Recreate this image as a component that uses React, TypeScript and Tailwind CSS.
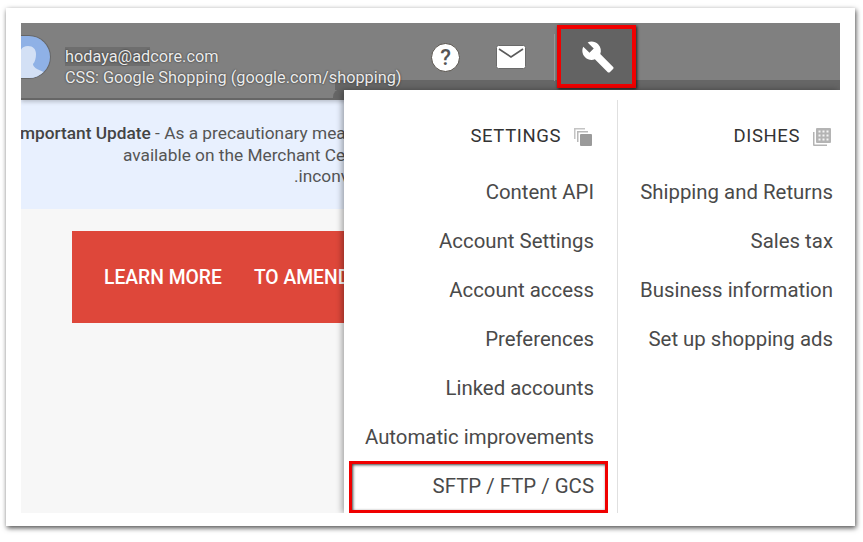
import React from 'react';
import { MdBuild } from 'react-icons/md';

const settingsItems = [
  'Content API',
  'Account Settings',
  'Account access',
  'Preferences',
  'Linked accounts',
  'Automatic improvements',
];

const dishesItems = ['Shipping and Returns', 'Sales tax', 'Business information', 'Set up shopping ads'];

const MenuRow = ({ label }: { label: string }) => (
  <div className="h-[49px] flex items-center justify-end text-[20.400px] text-[#4a4a4a] whitespace-nowrap">{label}</div>
);

const StackIcon = () => (
  <svg width="20" height="20" viewBox="0 0 20 20" className="ml-[12px] mr-[1px]">
    <path d="M1 1h11v1.500H2.500V12H1z" fill="#c4c4c4" />
    <path d="M4 4h11v1.500H5.500V15H4z" fill="#b8b8b8" />
    <rect x="7" y="7" width="12" height="12" rx="1" fill="#9a9a9a" />
  </svg>
);

const GridIcon = () => (
  <svg width="20" height="20" viewBox="0 0 20 20" className="ml-[12px] mr-[1px]">
    <path d="M1 5h1.500v12.500H15V19H2a1 1 0 0 1-1-1z" fill="#b4b4b4" />
    <rect x="4" y="1" width="15" height="15" rx="1" fill="#b4b4b4" />
    <path d="M6.500 3.500h2v2h-2zM10.500 3.500h2v2h-2zM14.500 3.500h2v2h-2zM6.500 7.500h2v2h-2zM10.500 7.500h2v2h-2zM14.500 7.500h2v2h-2zM6.500 11.500h2v2h-2zM10.500 11.500h2v2h-2zM14.500 11.500h2v2h-2z" fill="#f4f4f4" />
  </svg>
);

const MenuHeading = ({ children }: { children: React.ReactNode }) => (
  <div className="h-[68px] pt-[5px] flex items-center justify-end text-[18.500px] text-[#333333] tracking-[0.600px]">
    {children}
  </div>
);

export default function App() {
  return (
    <div className="w-[863px] h-[542px] bg-white pt-[8px] pl-[6px] font-['Roboto',sans-serif] overflow-hidden">
      <div className="w-[849px] h-[518px] bg-white pt-[15px] pl-[15px] shadow-[1px_2px_5px_rgba(0,0,0,0.7)]">
        <div className="relative w-[819px] h-[490px] overflow-hidden bg-[#f7f7f7]">
          {/* barra superior */}
          <div className="relative h-[77px] bg-[#808080] border-b-2 border-[#666666] flex shadow-[0_2px_4px_rgba(0,0,0,0.2)]">
            <div className="w-[30px] h-[44px] mt-[12px] bg-[#8fb1e6] rounded-r-[22px] overflow-hidden shrink-0 border-r border-y border-[#666666]">
              <svg width="30" height="44" viewBox="0 0 30 44">
                <path d="M0 44V36c0-1 0-3 0-5-1-1-1-3-1-5L-1 18c0-5 3-8 8-8s8 3 8 8c0 4-1 8-3 10 0 3 3 5 13 9l-3 7z" fill="#d3e0f5" />
              </svg>
            </div>
            <div className="relative z-10 ml-[14px] pt-[23px] text-[16.300px] leading-[21px] text-[#ececec] whitespace-nowrap [text-shadow:0_0_2px_#222]">
              <div>
                <span className="bg-[#6e6e6e]">hodaya@ad</span>core.com
              </div>
              <div>CSS: Google Shopping (google.com/shopping)</div>
            </div>
          </div>

          {/* banner */}
          <div className="h-[109px] bg-[#e8f0fe] pt-[23px] text-[17.300px] leading-[21.500px] text-[#555555] whitespace-nowrap">
            <div className="-ml-[6px]">
              <span className="font-medium text-[#444444]">Important Update</span> - As a precautionary measure
            </div>
            <div className="ml-[102px]">available on the Merchant Center</div>
            <div className="ml-[273px]">.inconvenience</div>
          </div>

          {/* botao vermelho */}
          <div className="ml-[51px] mt-[22px] h-[92px] w-[400px] bg-[#de473a] flex items-center pl-[32px] pt-[2px] gap-[32px] text-[19.300px] font-medium text-white whitespace-nowrap">
            <span>LEARN MORE</span>
            <span>TO AMEND</span>
          </div>

          {/* faixa escura por cima da barra */}
          <div className="absolute left-[314px] right-0 top-[57px] h-[10px] bg-[#666666]" />
          <div className="absolute left-[312px] top-[66px] w-[12px] h-[11px] bg-[#666666] rounded-tl-[8px]" />
          <div className="absolute left-[533px] top-[11px] w-px h-[47px] bg-[#999999]" />

          {/* icones da barra */}
          <div className="absolute left-[410px] top-[20px] w-[29px] h-[29px] rounded-full bg-white border border-[#55504a] flex items-center justify-center text-[22px] font-medium leading-none text-[#555555]">
            ?
          </div>
          <svg width="30" height="24" viewBox="0 0 30 24" className="absolute left-[475px] top-[22px]">
            <rect x="0.500" y="0.500" width="29" height="23" rx="2" fill="white" stroke="#6a6a6a" />
            <path d="M3 4l12 8 12-8" fill="none" stroke="#5a5a5a" strokeWidth="1.600" />
          </svg>

          {/* botao ativo com destaque */}
          <div className="absolute left-[536px] top-[2px] w-[79px] h-[63px] pl-[3px] bg-[#636363] border-[4px] border-[#f00000] shadow-[1px_1px_3px_rgba(0,0,0,0.8)] flex items-center justify-center">
            <MdBuild size={34} color="white" />
          </div>

          {/* menu */}
          <div className="absolute left-[323px] top-[67px] right-0 bottom-0 bg-white flex shadow-[-2px_0_6px_rgba(0,0,0,0.35)]">
            <div className="w-[274px] pr-[23px] pl-[21px] mt-[10px] border-r border-[#e0e0e0]">
              <MenuHeading>
                SETTINGS
                <StackIcon />
              </MenuHeading>
              {settingsItems.map((item) => (
                <MenuRow key={item} label={item} />
              ))}
              <div className="h-[52px] -mt-[1px] -ml-[16px] -mr-[14px] pr-[11px] pb-[2px] flex items-center justify-end text-[20.400px] text-[#4a4a4a] border-[3px] border-[#f00000] shadow-[inset_1px_1px_3px_rgba(0,0,0,0.75)]">
                SFTP / FTP / GCS
              </div>
            </div>
            <div className="flex-1 pr-[7px] mt-[10px]">
              <MenuHeading>
                DISHES
                <GridIcon />
              </MenuHeading>
              {dishesItems.map((item) => (
                <MenuRow key={item} label={item} />
              ))}
            </div>
          </div>
        </div>
      </div>
    </div>
  );
}
